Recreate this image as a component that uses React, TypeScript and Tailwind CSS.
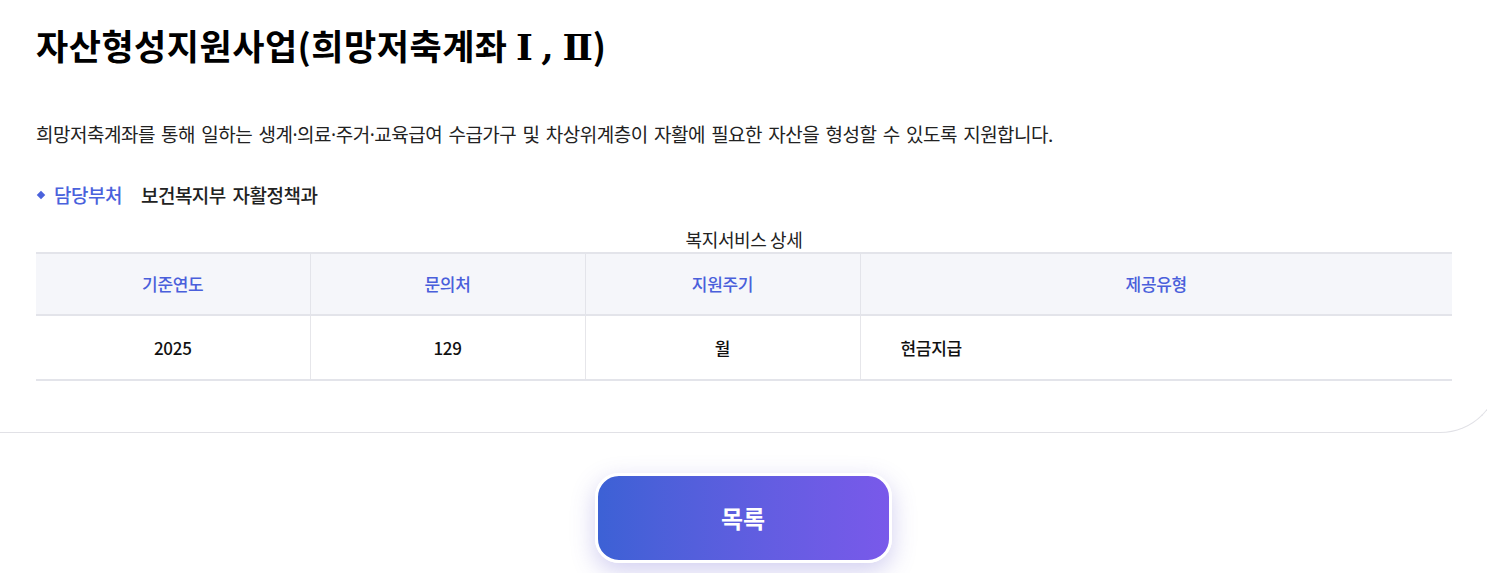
const cols = [
  { label: '기준연도', value: '2025', align: 'center' },
  { label: '문의처', value: '129', align: 'center' },
  { label: '지원주기', value: '월', align: 'center' },
  { label: '제공유형', value: '현금지급', align: 'left' },
];

export default function App() {
  return (
    <div
      className="h-[573px] w-full overflow-hidden bg-white text-[#111]"
      style={{ fontFamily: '"Noto Sans CJK KR", "Noto Sans", sans-serif' }}
    >
      {/* detail card, bleeds off the right edge */}
      <div className="mr-[-13px] rounded-br-[60px] border-b border-r border-[#e1e1e6] pl-9 pr-[47px] pb-[51px] pt-[19px]">
        <h1 className="text-[35px] font-bold leading-[52px] tracking-[0.5px] text-black">
          자산형성지원사업(희망저축계좌{' '}
          <span className="font-['DejaVu_Serif',serif] text-[36px] tracking-normal [word-spacing:-4px]">Ⅰ , Ⅱ</span>)
        </h1>

        <p className="mt-[48px] text-[19px] leading-[26px] tracking-[-0.5px] text-[#222] [word-spacing:2.5px]">
          희망저축계좌를 통해 일하는 생계<span className="font-['Noto_Sans',sans-serif]">·</span>의료
          <span className="font-['Noto_Sans',sans-serif]">·</span>주거
          <span className="font-['Noto_Sans',sans-serif]">·</span>교육급여 수급가구 및 차상위계층이 자활에 필요한 자산을 형성할 수 있도록 지원합니다.
        </p>

        <div className="mt-[34px] flex items-center text-[19px] leading-[26px] tracking-[-0.5px]">
          <span className="ml-[2px] mr-[10px] h-[6px] w-[6px] rotate-45 bg-[#4a62dc]" />
          <span className="font-medium text-[#4a62dc]">담당부처</span>
          <span className="ml-[19px] font-medium text-[#222] [word-spacing:3px]">보건복지부 자활정책과</span>
        </div>

        <table className="mt-[18px] w-full border-collapse text-[17px] tracking-[-0.3px]">
          <caption className="h-[26px] text-[18px] leading-[26px] tracking-[-0.4px] text-[#222]">
            복지서비스 상세
          </caption>
          <thead>
            <tr className="border-b-2 border-t-2 border-[#e3e4ea] bg-[#f5f6fa]">
              {cols.map((c, i) => (
                <th
                  key={c.label}
                  className={`h-[62px] font-medium text-[#4a5fdb] ${i === 0 ? 'w-[274px]' : i < 3 ? 'w-[275px] border-l border-[#e3e4ea]' : 'border-l border-[#e3e4ea]'}`}
                >
                  {c.label}
                </th>
              ))}
            </tr>
          </thead>
          <tbody>
            <tr className="border-b-2 border-[#e3e4ea]">
              {cols.map((c, i) => (
                <td
                  key={c.label}
                  className={`h-[65px] font-medium text-[#111] ${c.align === 'left' ? 'pl-[40px] text-left' : 'text-center'} ${i > 0 ? 'border-l border-[#e6e6ea]' : ''}`}
                >
                  {c.value}
                </td>
              ))}
            </tr>
          </tbody>
        </table>
      </div>

      <div className="mt-[40px] flex justify-center">
        <button className="ml-[-1px] flex h-[90px] w-[297px] items-center justify-center rounded-[24px] border-[3px] border-white bg-gradient-to-r from-[#3c61d5] to-[#7959ea] text-[24px] font-bold text-white shadow-[0_8px_24px_rgba(90,80,200,0.28)]">
          목록
        </button>
      </div>
    </div>
  );
}
